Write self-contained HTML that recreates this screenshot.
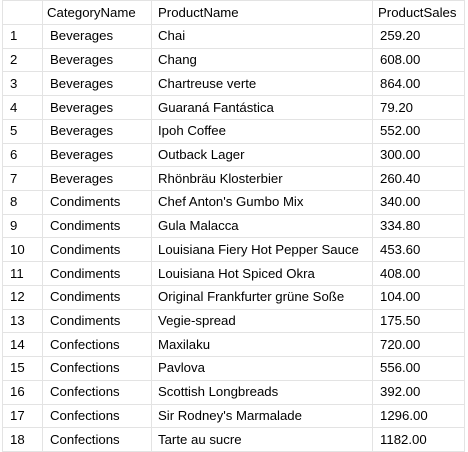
<!DOCTYPE html>
<html><head><style>
body{margin:0;background:#fff;width:468px;height:452px;overflow:hidden;font-family:"Liberation Sans",sans-serif;font-size:13.2px;color:#000}
table{position:absolute;left:2px;top:0;border-collapse:collapse;table-layout:fixed}
td{border:1px solid #e3e3e3;height:22.72px;padding:0;white-space:nowrap;overflow:hidden;line-height:22px}
tr:first-child td{height:23px}
td.n{padding-left:7px}
td.c{padding-left:7px}
td.p{padding-left:6px}
td.s{padding-left:7px}
</style></head><body>
<table>
<colgroup><col style="width:40px"><col style="width:109px"><col style="width:221px"><col style="width:92px"></colgroup>
<tr><td></td><td class="c" style="padding-left:4px">CategoryName</td><td class="p">ProductName</td><td class="s" style="padding-left:5px">ProductSales</td></tr>
<tr><td class="n">1</td><td class="c">Beverages</td><td class="p">Chai</td><td class="s">259.20</td></tr>
<tr><td class="n">2</td><td class="c">Beverages</td><td class="p">Chang</td><td class="s">608.00</td></tr>
<tr><td class="n">3</td><td class="c">Beverages</td><td class="p">Chartreuse verte</td><td class="s">864.00</td></tr>
<tr><td class="n">4</td><td class="c">Beverages</td><td class="p">Guaraná Fantástica</td><td class="s">79.20</td></tr>
<tr><td class="n">5</td><td class="c">Beverages</td><td class="p">Ipoh Coffee</td><td class="s">552.00</td></tr>
<tr><td class="n">6</td><td class="c">Beverages</td><td class="p">Outback Lager</td><td class="s">300.00</td></tr>
<tr><td class="n">7</td><td class="c">Beverages</td><td class="p">Rhönbräu Klosterbier</td><td class="s">260.40</td></tr>
<tr><td class="n">8</td><td class="c">Condiments</td><td class="p">Chef Anton's Gumbo Mix</td><td class="s">340.00</td></tr>
<tr><td class="n">9</td><td class="c">Condiments</td><td class="p">Gula Malacca</td><td class="s">334.80</td></tr>
<tr><td class="n">10</td><td class="c">Condiments</td><td class="p">Louisiana Fiery Hot Pepper Sauce</td><td class="s">453.60</td></tr>
<tr><td class="n">11</td><td class="c">Condiments</td><td class="p">Louisiana Hot Spiced Okra</td><td class="s">408.00</td></tr>
<tr><td class="n">12</td><td class="c">Condiments</td><td class="p">Original Frankfurter grüne Soße</td><td class="s">104.00</td></tr>
<tr><td class="n">13</td><td class="c">Condiments</td><td class="p">Vegie-spread</td><td class="s">175.50</td></tr>
<tr><td class="n">14</td><td class="c">Confections</td><td class="p">Maxilaku</td><td class="s">720.00</td></tr>
<tr><td class="n">15</td><td class="c">Confections</td><td class="p">Pavlova</td><td class="s">556.00</td></tr>
<tr><td class="n">16</td><td class="c">Confections</td><td class="p">Scottish Longbreads</td><td class="s">392.00</td></tr>
<tr><td class="n">17</td><td class="c">Confections</td><td class="p">Sir Rodney's Marmalade</td><td class="s">1296.00</td></tr>
<tr><td class="n">18</td><td class="c">Confections</td><td class="p">Tarte au sucre</td><td class="s">1182.00</td></tr>
</table>
</body></html>
